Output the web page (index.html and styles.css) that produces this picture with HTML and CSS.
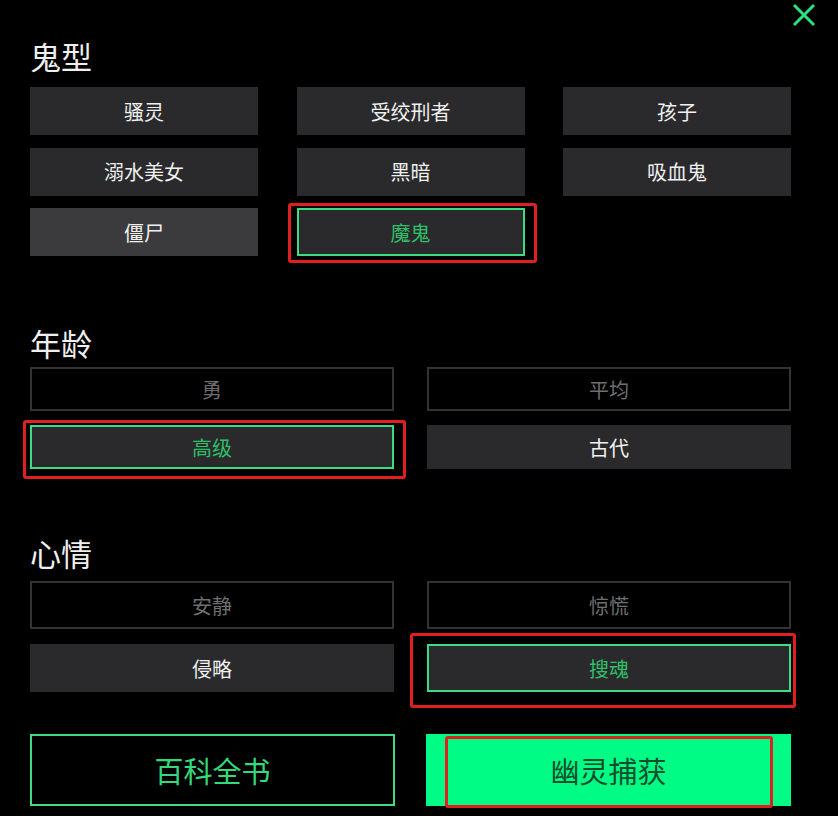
FILE: index.html
```html
<!DOCTYPE html>
<html lang="zh-CN">
<head>
    <meta charset="UTF-8">
    <meta name="viewport" content="width=device-width, initial-scale=1.0">
    <title>幽灵捕获</title>
    <link rel="stylesheet" href="styles.css">
</head>
<body>
    <div class="panel">
        <!-- 关闭按钮 -->
        <button class="close" type="button" aria-label="关闭">
            <svg width="24" height="24" viewBox="0 0 24 24">
                <path d="M2 2 L22 22 M22 2 L2 22" stroke="#2fe07f" stroke-width="3" fill="none"/>
            </svg>
        </button>

        <!-- 鬼型 -->
        <section class="group group-type">
            <h2>鬼型</h2>
            <div class="grid three">
                <button class="opt">骚灵</button>
                <button class="opt">受绞刑者</button>
                <button class="opt">孩子</button>
                <button class="opt">溺水美女</button>
                <button class="opt">黑暗</button>
                <button class="opt">吸血鬼</button>
                <button class="opt hover">僵尸</button>
                <div class="marked">
                    <button class="opt selected">魔鬼</button>
                    <span class="mark mark-demon"></span>
                </div>
            </div>
        </section>

        <!-- 年龄 -->
        <section class="group group-age">
            <h2>年龄</h2>
            <div class="grid two short">
                <button class="opt off">勇</button>
                <button class="opt off">平均</button>
                <div class="marked">
                    <button class="opt selected">高级</button>
                    <span class="mark mark-age"></span>
                </div>
                <button class="opt">古代</button>
            </div>
        </section>

        <!-- 心情 -->
        <section class="group group-mood">
            <h2>心情</h2>
            <div class="grid two">
                <button class="opt off">安静</button>
                <button class="opt off">惊慌</button>
                <button class="opt">侵略</button>
                <div class="marked">
                    <button class="opt selected">搜魂</button>
                    <span class="mark mark-mood"></span>
                </div>
            </div>
        </section>

        <!-- 底部按钮 -->
        <div class="actions">
            <button class="big ghost">百科全书</button>
            <div class="marked">
                <button class="big primary">幽灵捕获</button>
                <span class="mark mark-catch"></span>
            </div>
        </div>
    </div>
</body>
</html>
```

FILE: styles.css
```css
body {
    margin: 0;
    background-color: #000;
    font-family: "Noto Sans CJK SC", "Noto Sans", sans-serif;
    color: #f2f2f2;
}
.panel {
    position: relative;
    width: 838px;
    height: 816px;
    box-sizing: border-box;
    padding: 38px 47px 0 30px;
}
.close {
    position: absolute;
    top: 3px;
    right: 22px;
    width: 24px;
    height: 24px;
    padding: 0;
    border: none;
    background: none;
}
.close svg {
    display: block;
}

h2 {
    margin: 0;
    font-size: 31px;
    font-weight: 400;
    line-height: 36px;
    color: #efefef;
}
.group-type h2 {
    margin-bottom: 13px;
}
.group-age {
    margin-top: 69px;
}
.group-age h2 {
    margin-bottom: 6px;
}
.group-mood {
    margin-top: 66px;
}
.group-mood h2 {
    margin-bottom: 10px;
}

.grid {
    display: grid;
}
.grid.three {
    grid-template-columns: repeat(3, 228px);
    column-gap: 38.5px;
    row-gap: 12.5px;
}
.grid.two {
    grid-template-columns: repeat(2, 364px);
    column-gap: 33px;
    row-gap: 15px;
}
.grid.short {
    row-gap: 14px;
}

.opt {
    display: block;
    width: 100%;
    height: 48px;
    box-sizing: border-box;
    border: 2px solid #2a2a2c;
    background-color: #2a2a2c;
    color: #f0f0f0;
    font-family: inherit;
    font-size: 20px;
    padding: 0;
}
.short .opt {
    height: 44px;
}
.opt.hover {
    background-color: #3b3b3d;
    border-color: #3b3b3d;
}
.opt.off {
    background-color: #000;
    border-color: #333335;
    color: #6f6f6f;
}
.opt.selected {
    border-color: #3ddc84;
    color: #2fbf68;
}

.actions {
    display: grid;
    grid-template-columns: 365px 365px;
    column-gap: 31px;
    margin-top: 42px;
}
.big {
    display: block;
    width: 100%;
    height: 72px;
    box-sizing: border-box;
    font-family: inherit;
    font-size: 29px;
    padding: 0;
}
.big.ghost {
    background-color: #000;
    border: 2px solid #3ddc84;
    color: #33d97a;
}
.big.primary {
    background-color: #00fc85;
    border: none;
    color: #0f4d2c;
}

/* 红色标注框 */
.marked {
    position: relative;
}
.mark {
    position: absolute;
    border: 3px solid #e0201e;
    border-radius: 3px;
    pointer-events: none;
}
.mark-demon {
    top: -5px;
    left: -9px;
    right: -12px;
    bottom: -7px;
}
.mark-age {
    top: -5px;
    left: -7px;
    right: -12px;
    bottom: -10px;
}
.mark-mood {
    top: -11px;
    left: -17px;
    right: -5px;
    bottom: -16px;
}
.mark-catch {
    top: 2px;
    left: 19px;
    right: 18px;
    bottom: -2px;
}
```
